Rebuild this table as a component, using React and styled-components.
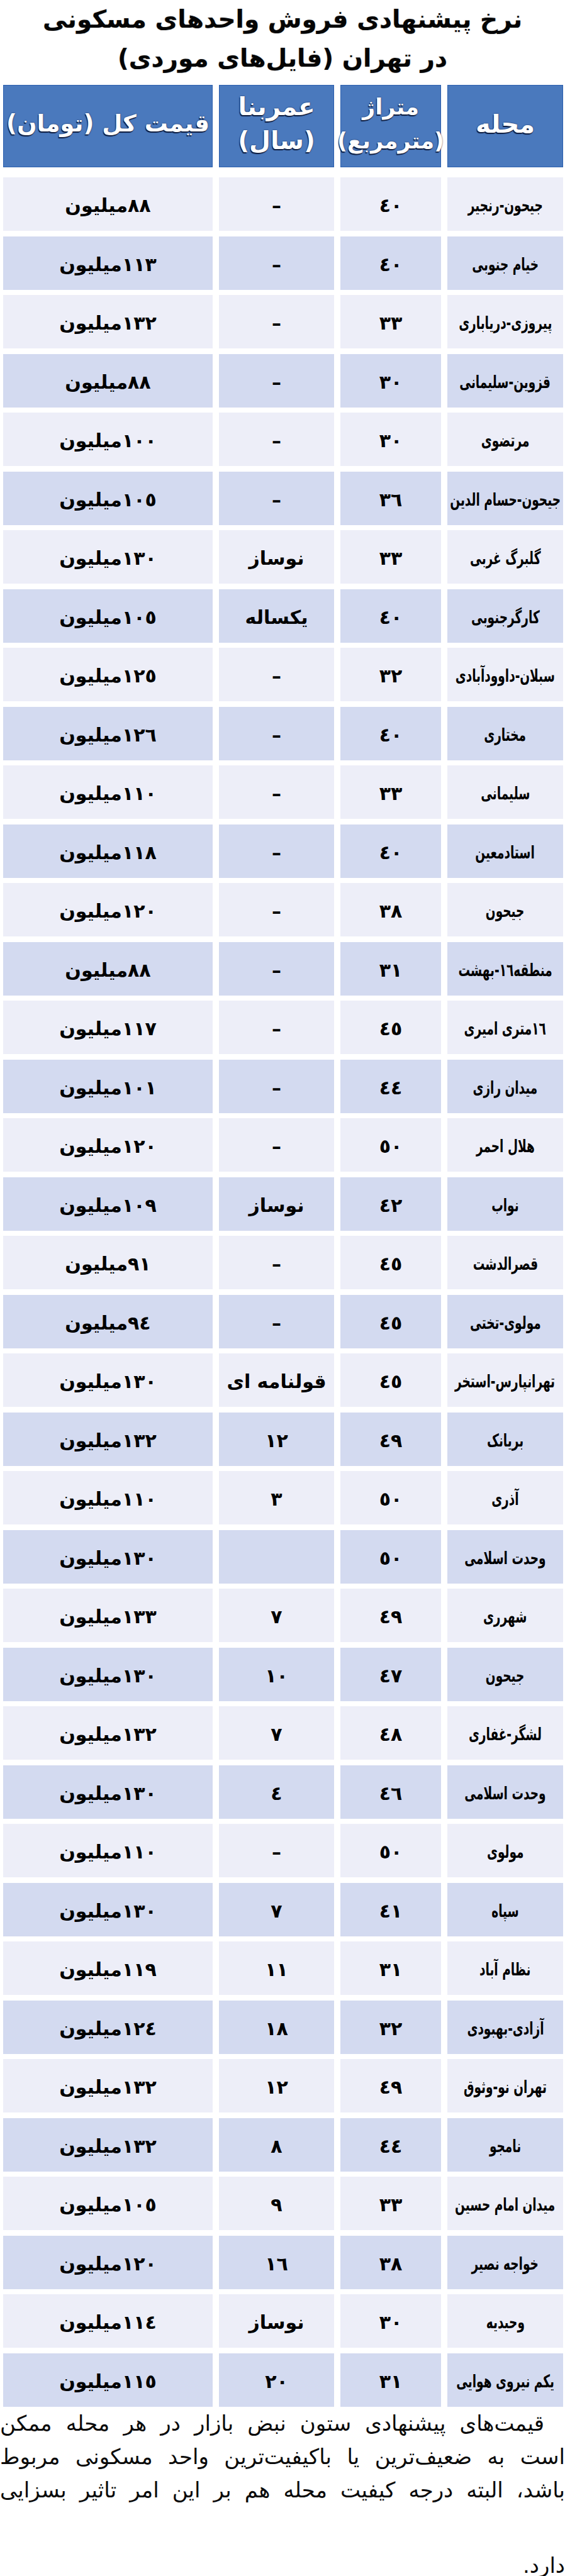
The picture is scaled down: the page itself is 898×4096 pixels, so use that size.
import React from 'react';
import styled, { createGlobalStyle } from 'styled-components';

const GlobalStyle = createGlobalStyle`
  html, body {
    margin: 0;
    padding: 0;
    background: #ffffff;
  }
  body {
    overflow-x: hidden;
  }
`

const FONT = `"DejaVu Sans", sans-serif`

const rows = [
  ['جیحون-رنجیر', '٤٠', '–', '٨٨میلیون'],
  ['خیام جنوبی', '٤٠', '–', '١١٣میلیون'],
  ['پیروزی-دریاباری', '٣٣', '–', '١٣٢میلیون'],
  ['قزوین-سلیمانی', '٣٠', '–', '٨٨میلیون'],
  ['مرتضوی', '٣٠', '–', '١٠٠میلیون'],
  ['جیحون-حسام الدین', '٣٦', '–', '١٠٥میلیون'],
  ['گلبرگ غربی', '٣٣', 'نوساز', '١٣٠میلیون'],
  ['کارگرجنوبی', '٤٠', 'یکساله', '١٠٥میلیون'],
  ['سبلان-داوودآبادی', '٣٢', '–', '١٢٥میلیون'],
  ['مختاری', '٤٠', '–', '١٢٦میلیون'],
  ['سلیمانی', '٣٣', '–', '١١٠میلیون'],
  ['استادمعین', '٤٠', '–', '١١٨میلیون'],
  ['جیحون', '٣٨', '–', '١٢٠میلیون'],
  ['منطقه١٦-بهشت', '٣١', '–', '٨٨میلیون'],
  ['١٦متری امیری', '٤٥', '–', '١١٧میلیون'],
  ['میدان رازی', '٤٤', '–', '١٠١میلیون'],
  ['هلال احمر', '٥٠', '–', '١٢٠میلیون'],
  ['نواب', '٤٢', 'نوساز', '١٠٩میلیون'],
  ['قصرالدشت', '٤٥', '–', '٩١میلیون'],
  ['مولوی-تختی', '٤٥', '–', '٩٤میلیون'],
  ['تهرانپارس-استخر', '٤٥', 'قولنامه ای', '١٣٠میلیون'],
  ['بریانک', '٤٩', '١٢', '١٣٢میلیون'],
  ['آذری', '٥٠', '٣', '١١٠میلیون'],
  ['وحدت اسلامی', '٥٠', '', '١٣٠میلیون'],
  ['شهرری', '٤٩', '٧', '١٣٣میلیون'],
  ['جیحون', '٤٧', '١٠', '١٣٠میلیون'],
  ['لشگر-غفاری', '٤٨', '٧', '١٣٢میلیون'],
  ['وحدت اسلامی', '٤٦', '٤', '١٣٠میلیون'],
  ['مولوی', '٥٠', '–', '١١٠میلیون'],
  ['سپاه', '٤١', '٧', '١٣٠میلیون'],
  ['نظام آباد', '٣١', '١١', '١١٩میلیون'],
  ['آزادی-بهبودی', '٣٢', '١٨', '١٢٤میلیون'],
  ['تهران نو-وثوق', '٤٩', '١٢', '١٣٢میلیون'],
  ['نامجو', '٤٤', '٨', '١٣٢میلیون'],
  ['میدان امام حسین', '٣٣', '٩', '١٠٥میلیون'],
  ['خواجه نصیر', '٣٨', '١٦', '١٢٠میلیون'],
  ['وحیدیه', '٣٠', 'نوساز', '١١٤میلیون'],
  ['یکم نیروی هوایی', '٣١', '٢٠', '١١٥میلیون'],
]

const Page = styled.div`
  width: 898px;
  direction: rtl;
  background: #ffffff;
  color: #000;
`

const Title = styled.h1`
  margin: 0;
  font-family: ${FONT};
  font-weight: bold;
  font-size: 39px;
  line-height: 62px;
  text-align: center;
  color: #050505;
  text-shadow: 0 0 2px rgba(0, 0, 0, 0.25);
`

const Table = styled.div`
  margin-top: 11px;
  display: flex;
  flex-direction: column;
  gap: 8.5px;
`

const Row = styled.div`
  display: grid;
  grid-template-columns: 184px 160px 183px 333px;
  column-gap: 10px;
  padding: 0 3px 0 5px;
  height: ${p => (p.$head ? '131px' : '85px')};
  margin-bottom: ${p => (p.$head ? '7.5px' : '0')};
`

const HeadCell = styled.div`
  display: flex;
  flex-direction: column;
  align-items: center;
  justify-content: center;
  background: #4a79bd;
  border: 1.5px solid #2c5fae;
  color: #ffffff;
  font-family: ${FONT};
  font-weight: bold;
  font-size: ${p => p.$size || 37}px;
  line-height: 54px;
  text-align: center;
  white-space: nowrap;
  padding-bottom: 8px;
  text-shadow: -1px 2px 1px #0d1b3d, 0 0 2px #13254f;
`

const Cell = styled.div`
  display: flex;
  align-items: center;
  justify-content: center;
  background: ${p => (p.$dark ? '#d3daf0' : '#edeef8')};
  font-family: ${FONT};
  font-weight: bold;
  font-size: 30px;
  white-space: nowrap;
  padding-top: 4px;
`

// the source typeface is a narrow persian face; squeeze the wide fallback
const Squeeze = styled.span`
  display: inline-block;
  font-size: ${p => p.$size || 30}px;
  transform: scaleX(${p => p.$sx || 1});
`

const Note = styled.div`
  font-family: ${FONT};
  font-size: 34px;
  line-height: 53px;
  color: #0a0a0a;
`

const NoteLine = styled.div`
  white-space: nowrap;
  text-align: justify;
  text-align-last: justify;
  padding-right: ${p => p.$indent || 0}px;
`

const NoteEnd = styled.div`
  margin-top: 67px;
  text-align: right;
`

const App = () => {
  return (
    <>
      <GlobalStyle />
      <Page>
        <Title>
          نرخ پیشنهادی فروش واحدهای مسکونی
          <br />
          در تهران (فایل‌های موردی)
        </Title>
        <Table>
          <Row $head>
            <HeadCell $size={40}>محله</HeadCell>
            <HeadCell $size={35}>
              <span>متراژ</span>
              <span>(مترمربع)</span>
            </HeadCell>
            <HeadCell $size={39}>
              <span>عمربنا</span>
              <span>(سال)</span>
            </HeadCell>
            <HeadCell>قیمت کل (تومان)</HeadCell>
          </Row>
          {rows.map((r, i) => (
            <Row key={i}>
              <Cell $dark={i % 2 === 1}>
                <Squeeze $size={28} $sx={0.66}>{r[0]}</Squeeze>
              </Cell>
              <Cell $dark={i % 2 === 1}>{r[1]}</Cell>
              <Cell $dark={i % 2 === 1}>{r[2]}</Cell>
              <Cell $dark={i % 2 === 1}>{r[3]}</Cell>
            </Row>
          ))}
        </Table>
        <Note>
          <NoteLine $indent={33}>قیمت‌های پیشنهادی ستون نبض بازار در هر محله ممکن</NoteLine>
          <NoteLine>است به ضعیف‌ترین یا باکیفیت‌ترین واحد مسکونی مربوط</NoteLine>
          <NoteLine>باشد، البته درجه کیفیت محله هم بر این امر تاثیر بسزایی</NoteLine>
          <NoteEnd>دارد.</NoteEnd>
        </Note>
      </Page>
    </>
  );
}

export default App;
